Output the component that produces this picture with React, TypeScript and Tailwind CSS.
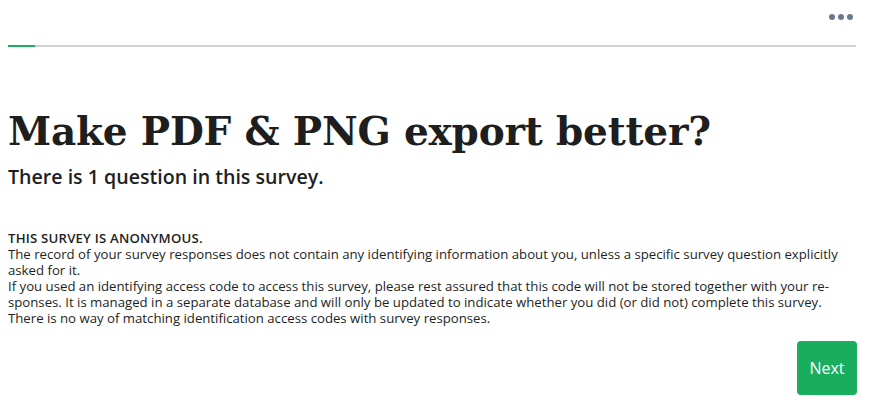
import React from 'react';

const App: React.FC = () => {
  return (
    <div className="w-[869px] h-[414px] bg-white text-[#1e1e1e] font-['Open_Sans',sans-serif] overflow-hidden">
      {/* 顶部 */}
      <div className="flex justify-end pr-[16px] pt-[14px] h-[32px]">
        <div className="flex gap-[3px] items-center h-[6px]">
          <span className="w-[6px] h-[6px] rounded-full bg-[#6c7790]" />
          <span className="w-[6px] h-[6px] rounded-full bg-[#6c7790]" />
          <span className="w-[6px] h-[6px] rounded-full bg-[#6c7790]" />
        </div>
      </div>

      {/* 进度条 */}
      <div className="mx-[8px] mr-[13px] mt-[13px] h-[2px] bg-[#d0d0d6] flex">
        <div className="w-[27px] h-full bg-[#18ae5e]" />
      </div>

      {/* 内容 */}
      <div className="px-[8px] pr-[12px]">
        <h1 className="mt-[58px] text-[39px] leading-[52px] font-bold font-['DejaVu_Serif',serif] text-[#1e1e1e] tracking-[-0.2px]">
          Make PDF &amp; PNG export better?
        </h1>
        <h2 className="mt-[7px] text-[19.6px] leading-[26px] font-semibold">
          There is 1 question in this survey.
        </h2>

        <div className="mt-[40px] text-[13.2px] leading-[16px] whitespace-nowrap">
          <p className="font-semibold tracking-[0.2px]">THIS SURVEY IS ANONYMOUS.</p>
          <p>
            The record of your survey responses does not contain any identifying information about you, unless a specific survey question explicitly
            <br />
            asked for it.
          </p>
          <p>
            If you used an identifying access code to access this survey, please rest assured that this code will not be stored together with your re-
            <br />
            sponses. It is managed in a separate database and will only be updated to indicate whether you did (or did not) complete this survey.
            <br />
            There is no way of matching identification access codes with survey responses.
          </p>
        </div>

        <div className="flex justify-end mt-[15px]">
          <button className="w-[60px] h-[54px] rounded-[4px] bg-[#18ae5e] text-white text-[16px]">
            Next
          </button>
        </div>
      </div>
    </div>
  );
};

export default App;
